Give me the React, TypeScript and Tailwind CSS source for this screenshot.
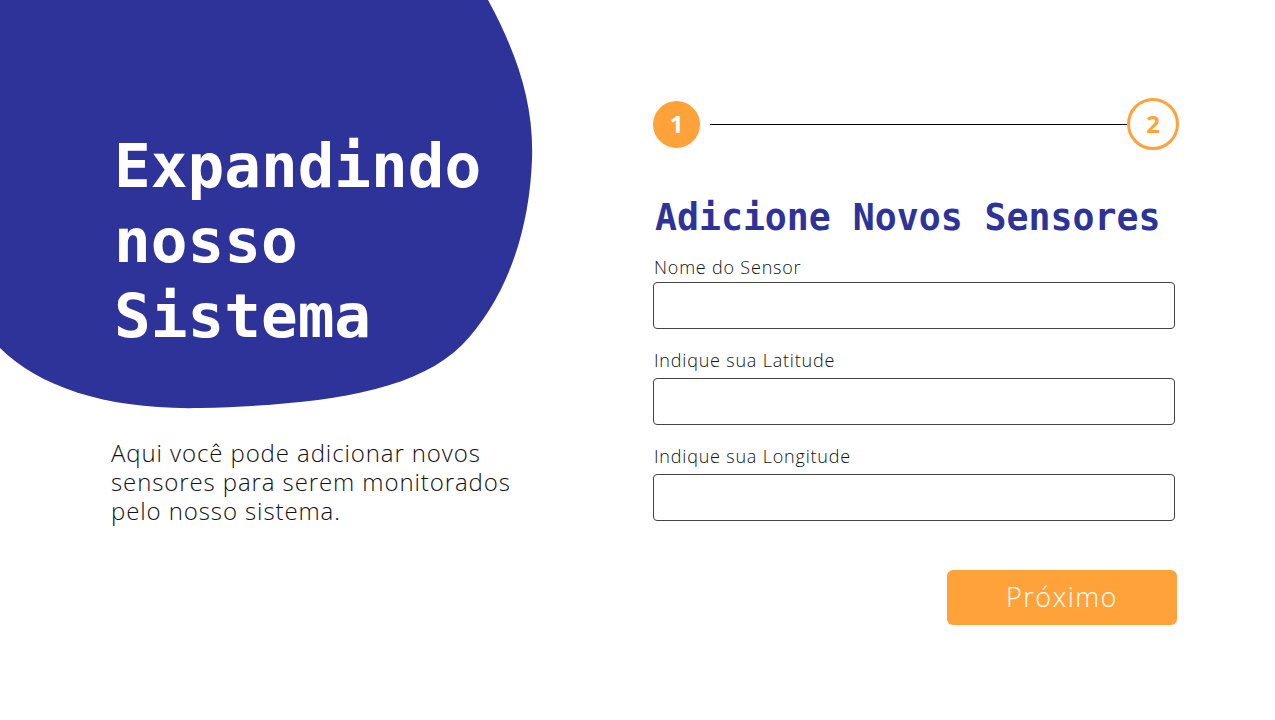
import React from "react";

const mono = { fontFamily: '"DejaVu Sans Mono", "Liberation Mono", monospace' };

function Field({ label, first }: { label: string; first?: boolean }) {
  return (
    <div className="flex flex-col">
      <label className={`text-[18px] leading-[22px] font-light tracking-[0.8px] text-[#111] pl-[1px] ${first ? "" : "-mt-[3px]"}`}>{label}</label>
      <input className={`${first ? "mt-[4px]" : "mt-[7px]"} h-[47px] w-[522px] rounded-[4px] border border-[#444] bg-white outline-none`} />
    </div>
  );
}

export default function App() {
  return (
    <div
      className="relative w-[1275px] h-[720px] overflow-hidden bg-white"
      style={{ fontFamily: '"Open Sans", "Noto Sans", sans-serif' }}
    >
      <svg className="absolute left-0 top-0" width="560" height="420" viewBox="0 0 560 420">
        <path
          d="M0,0 L488,0 C518,55 534,105 532,160 C529,235 505,300 462,345 C412,395 310,405 200,408 C110,410 40,388 0,348 Z"
          fill="#2E3399"
        />
      </svg>
      <div className="relative flex h-full">
        <div className="w-[653px] pl-[111px] pt-[128px] flex flex-col">
          <h1
            className="pl-[3px] text-[61px] leading-[75px] font-bold text-white"
            style={mono}
          >
            Expandindo
            <br />
            nosso
            <br />
            Sistema
          </h1>
          <p className="mt-[85px] w-[440px] text-[24px] leading-[29px] font-light tracking-[0.9px] text-[#111]">
            Aqui você pode adicionar novos sensores para serem monitorados pelo nosso sistema.
          </p>
        </div>
        <div className="flex flex-col pt-[98px]">
          <div className="flex items-center w-[526px]">
            <div className="flex h-[47px] w-[47px] items-center justify-center rounded-full bg-[#FFA23A] text-[24px] font-bold text-white">
              1
            </div>
            <div className="ml-[10px] h-[1px] flex-1 bg-black" />
            <div className="flex h-[52px] w-[52px] items-center justify-center rounded-full border-[3px] border-[#FFA23A] text-[24px] font-bold text-[#FFA23A]">
              2
            </div>
          </div>
          <h2
            className="mt-[46px] pl-[2px] text-[36.5px] leading-[44px] font-bold text-[#2E3399]"
            style={mono}
          >
            Adicione Novos Sensores
          </h2>
          <div className="mt-[16px] flex flex-col gap-[23px]">
            <Field label="Nome do Sensor" first />
            <Field label="Indique sua Latitude" />
            <Field label="Indique sua Longitude" />
          </div>
          <div className="mt-[49px] flex justify-end w-[524px]">
            <button className="h-[55px] w-[230px] rounded-[6px] bg-[#FFA23A] text-[27px] font-light tracking-[1.5px] text-white">
              Próximo
            </button>
          </div>
        </div>
      </div>
    </div>
  );
}
